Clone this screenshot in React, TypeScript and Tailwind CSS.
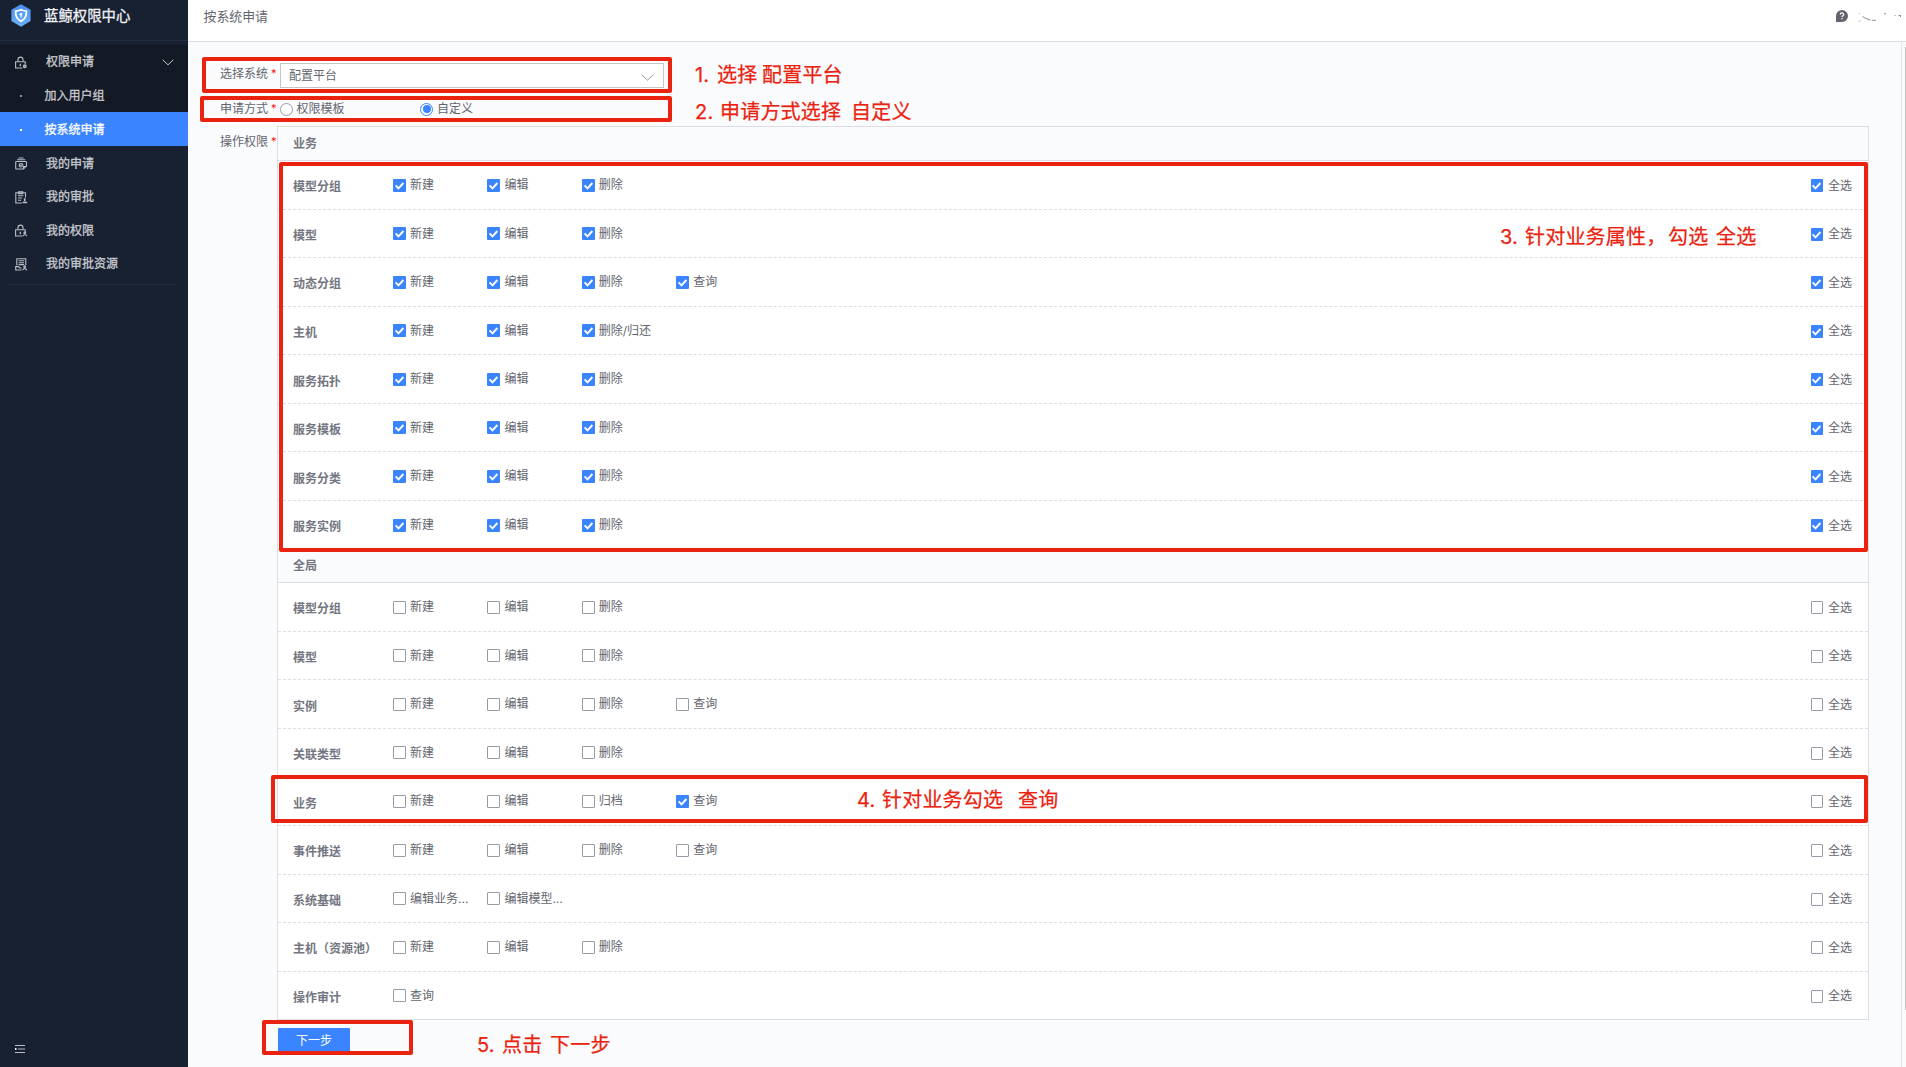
import React from 'react';

type Action = { name: string; checked?: boolean };
type RowData = { label: string; all?: boolean; actions: Action[] };

const on = (...names: string[]): Action[] => names.map((name) => ({ name, checked: true }));
const off = (...names: string[]): Action[] => names.map((name) => ({ name }));

const bizRows: RowData[] = [
  { label: '模型分组', all: true, actions: on('新建', '编辑', '删除') },
  { label: '模型', all: true, actions: on('新建', '编辑', '删除') },
  { label: '动态分组', all: true, actions: on('新建', '编辑', '删除', '查询') },
  { label: '主机', all: true, actions: on('新建', '编辑', '删除/归还') },
  { label: '服务拓扑', all: true, actions: on('新建', '编辑', '删除') },
  { label: '服务模板', all: true, actions: on('新建', '编辑', '删除') },
  { label: '服务分类', all: true, actions: on('新建', '编辑', '删除') },
  { label: '服务实例', all: true, actions: on('新建', '编辑', '删除') },
];

const globalRows: RowData[] = [
  { label: '模型分组', actions: off('新建', '编辑', '删除') },
  { label: '模型', actions: off('新建', '编辑', '删除') },
  { label: '实例', actions: off('新建', '编辑', '删除', '查询') },
  { label: '关联类型', actions: off('新建', '编辑', '删除') },
  { label: '业务', actions: [...off('新建', '编辑', '归档'), ...on('查询')] },
  { label: '事件推送', actions: off('新建', '编辑', '删除', '查询') },
  { label: '系统基础', actions: off('编辑业务...', '编辑模型...') },
  { label: '主机（资源池）', actions: off('新建', '编辑', '删除') },
  { label: '操作审计', actions: off('查询') },
];

function Checkbox({ checked, narrow }: { checked?: boolean; narrow?: boolean }) {
  const size = narrow ? 'w-[12px]' : 'w-[13px]';
  if (!checked) {
    return <span className={`${size} h-[13px] shrink-0 rounded-[1px] border border-[#979ba5] bg-white`} />;
  }
  return (
    <span className={`${size} flex h-[13px] shrink-0 items-center justify-center rounded-[1px] bg-[#3a84ff]`}>
      <svg width="11" height="11" viewBox="0 0 11 11" fill="none" stroke="#fff" strokeWidth="1.9">
        <path d="M1.6 5.4 4.5 8.3 9.4 3" />
      </svg>
    </span>
  );
}

function Row({ row, last }: { row: RowData; last: boolean }) {
  return (
    <div
      className={`flex h-[48.57px] items-center border-b bg-white pl-[15px] pr-[16px] ${
        last ? 'border-solid border-[#dcdee5]' : 'border-dashed border-[#dcdee5]'
      }`}
    >
      <div className="w-[100px] shrink-0 whitespace-nowrap pt-[5px] font-bold text-[#737680]">{row.label}</div>
      <div className="flex grow pt-[0.6px]">
        {row.actions.map((a) => (
          <div key={a.name} className="flex w-[94.4px] items-center gap-[4px] whitespace-nowrap">
            <Checkbox checked={a.checked} />
            <span>{a.name}</span>
          </div>
        ))}
      </div>
      <div className="flex items-center gap-[5px] pt-[1.6px]">
        <Checkbox checked={row.all} narrow />
        <span>全选</span>
      </div>
    </div>
  );
}

function LockBase() {
  return (
    <>
      <path d="M3 5.500V3.600a2.500 2.500 0 0 1 5 0v1.900" />
      <path d="M7.500 12H.6V5.800h9.600v2.200" />
      <path d="M5.300 7.800v2.400" strokeWidth="1.300" />
    </>
  );
}

function MenuIcon({ kind }: { kind: string }) {
  return (
    <svg width="13" height="13" viewBox="0 0 13 13" fill="none" stroke="#b9bcc4" strokeWidth="1.1" className="shrink-0">
      {kind === 'apply' && (
        <>
          <LockBase />
          <circle cx="9.800" cy="10.300" r="1.200" strokeWidth="1.500" />
        </>
      )}
      {kind === 'mine' && (
        <>
          <path d="M3.500 1h5M2 2.800h8.200" />
          <path d="M8.500 12h-7a.8.8 0 0 1-.8-.8V5.300c0-.5.300-.8.800-.8h9.200c.5 0 .8.300.8.800v3.800z" />
          <path d="M4.200 8.200h3.700c0-2.300-3.700-2.300-3.700 0 0 2 2.200 2.300 3.300 1.200" />
          <path d="M8.500 12V9.500h2.800" />
        </>
      )}
      {kind === 'approve' && (
        <>
          <path d="M6.800 12H.8V1.800h9.700v4.700" />
          <path d="M3.500.8h4.300v1.800H3.500zM3 4.800h5.300M3 7h4M3 9.200h3" />
          <path d="M9.700 7.200v3M7.500 11.500h4.700" strokeWidth="1.700" />
        </>
      )}
      {kind === 'perm' && (
        <>
          <LockBase />
          <circle cx="9.800" cy="9" r=".9" />
          <path d="M8 12.200c.3-2 3.400-2 3.800 0" />
        </>
      )}
      {kind === 'resource' && (
        <>
          <path d="M1.800 7.500V.7h9v6.200M3.600 2.800h5.500M3.600 4.800h5.500M3.600 6.600h5.500" />
          <path d="M6.500 12H.7V8.600h3l1 1.400h2" />
          <circle cx="9.700" cy="8.800" r=".9" />
          <path d="M7.800 12.300c.3-2.200 3.400-2.200 3.800 0" />
        </>
      )}
    </svg>
  );
}

const menu = [
  { kind: 'mine', label: '我的申请' },
  { kind: 'approve', label: '我的审批' },
  { kind: 'perm', label: '我的权限' },
  { kind: 'resource', label: '我的审批资源' },
];

function Sidebar() {
  return (
    <aside className="flex w-[188px] shrink-0 flex-col bg-[#182132] text-[12px] text-[#c8cad0] [-webkit-text-stroke:0.3px_currentColor]">
      <div className="flex h-[41px] items-center border-b border-[#252e3f] pb-[9px] pl-[11px]">
        <svg width="20" height="23" viewBox="0 0 20 23" className="shrink-0">
          <defs>
            <linearGradient id="logo" x1="0" y1="0" x2="0" y2="1">
              <stop offset="0" stopColor="#4b8df2" />
              <stop offset="1" stopColor="#6bb3f8" />
            </linearGradient>
          </defs>
          <path d="M10 .3 19.6 5.8v11.3L10 22.7.4 17.1V5.8z" fill="url(#logo)" />
          <path d="M10 5.7c2 1 3.7 1.400 5.400 1.400.2 5-1.800 8.400-5.400 10.200-3.600-1.800-5.600-5.200-5.400-10.200 1.700 0 3.400-.4 5.400-1.400z" fill="none" stroke="#fff" strokeWidth="1.8" />
          <circle cx="10" cy="10.3" r="1.3" fill="#fff" />
          <path d="M10 10v3.6" stroke="#fff" strokeWidth="1.2" />
        </svg>
        <span className="ml-[13px] pt-px text-[14.4px] text-[#f0f1f5]">蓝鲸权限中心</span>
      </div>
      <div className="mt-[4px] flex h-[67px] flex-col bg-[#141a25]">
        <div className="flex h-[33.5px] items-center pl-[15px] pr-[14px] pt-px">
          <MenuIcon kind="apply" />
          <span className="ml-[18px] grow">权限申请</span>
          <svg width="12" height="7" viewBox="0 0 12 7" fill="none" stroke="#c4c6cc" strokeWidth="1">
            <path d="M.7.8 6 5.800 11.300.8" />
          </svg>
        </div>
        <div className="flex h-[33.5px] items-center pl-[20px] pt-[2px]">
          <span className="h-[2px] w-[2px] bg-[#8a8e99]" />
          <span className="ml-[22.5px]">加入用户组</span>
        </div>
      </div>
      <div className="flex h-[34px] items-center bg-[#3a84ff] pl-[20px] pt-px text-white">
        <span className="h-[2px] w-[2px] bg-white" />
        <span className="ml-[22.5px]">按系统申请</span>
      </div>
      {menu.map((m) => (
        <div key={m.kind} className="flex h-[33.6px] items-center pl-[15px] pt-[1.5px]">
          <MenuIcon kind={m.kind} />
          <span className="ml-[18px]">{m.label}</span>
        </div>
      ))}
      <div className="ml-[8px] mt-[4px] h-px w-[168px] bg-[#252e3f]" />
      <svg width="10" height="10" viewBox="0 0 10 10" className="mb-[13px] ml-[15px] mt-auto" stroke="#b9bdc6">
        <path d="M0 1.500h10M3 5h7M0 8.500h10" />
        <path d="M0 5h1.500" stroke="#fff" strokeWidth="2" />
      </svg>
    </aside>
  );
}

function Label({ children }: { children: React.ReactNode }) {
  return (
    <div className="flex w-[58px] shrink-0 whitespace-nowrap text-[12px] leading-[16px] text-[#63656e]">
      {children}
      <span className="ml-[3px] text-[11px] leading-[14px] text-[#ff1010]">*</span>
    </div>
  );
}

function Radio({ checked }: { checked?: boolean }) {
  return checked ? (
    <span className="flex h-[13px] w-[13px] items-center justify-center rounded-full border border-[#3a84ff] bg-white">
      <span className="h-[8px] w-[8px] rounded-full bg-[#3a84ff]" />
    </span>
  ) : (
    <span className="h-[13px] w-[13px] rounded-full border border-[#979ba5] bg-white" />
  );
}

const frame = 'pointer-events-none absolute rounded-[2px] border-[4px] border-[#ea2310]';
const note =
  'absolute flex whitespace-pre text-[20px] leading-[28px] tracking-[0.2px] text-[#ea2310] [-webkit-text-stroke:0.25px_#ea2310]';

function Annotations() {
  return (
    <>
      <div className={`${frame} left-[202px] top-[57px] h-[36px] w-[470px]`} />
      <div className={`${frame} left-[200px] top-[96px] h-[26px] w-[472px]`} />
      <div className={`${frame} left-[279px] top-[162px] h-[390px] w-[1589px]`} />
      <div className={`${frame} left-[271px] top-[775px] h-[48px] w-[1597px]`} />
      <div className={`${frame} left-[262px] top-[1020px] h-[35px] w-[151px]`} />
      <div className={`${note} left-[695px] top-[61px]`}>
        <span className="w-[22px]">1.</span>
        <span className="w-[45px]">选择</span>
        <span>配置平台</span>
      </div>
      <div className={`${note} left-[695px] top-[98px]`}>
        <span className="w-[25px]">2.</span>
        <span className="w-[131px]">申请方式选择</span>
        <span>自定义</span>
      </div>
      <div className={`${note} left-[1500px] top-[223px]`}>
        <span className="w-[25px]">3.</span>
        <span className="w-[143px]">针对业务属性，</span>
        <span className="w-[48px]">勾选</span>
        <span>全选</span>
      </div>
      <div className={`${note} left-[857px] top-[786px]`}>
        <span className="w-[25px]">4.</span>
        <span className="w-[136px]">针对业务勾选</span>
        <span>查询</span>
      </div>
      <div className={`${note} left-[477px] top-[1031px]`}>
        <span className="w-[25px]">5.</span>
        <span className="w-[48px]">点击</span>
        <span>下一步</span>
      </div>
    </>
  );
}

export default function App() {
  return (
    <div className="relative flex h-[1067px] w-[1906px] overflow-hidden bg-[#fafbfd] font-['Inter','Noto_Sans_CJK_SC',sans-serif] text-[12px] leading-[18px] text-[#63656e]">
      <Sidebar />
      <main className="flex min-w-0 grow flex-col">
        <header className="flex h-[42px] shrink-0 items-center border-b border-[#dcdee5] bg-white pb-[8px] pl-[15.5px]">
          <span className="grow text-[12.9px]">按系统申请</span>
          <svg width="12" height="12" viewBox="0 0 12 12" className="mb-px shrink-0">
            <path d="M6 0a6 6 0 1 1 0 12H0V6a6 6 0 0 1 6-6z" fill="#63656e" />
            <path d="M4.300 4.600c0-2.200 3.400-2.200 3.400 0 0 1.200-1.700 1.100-1.700 2.400M6 8v1.200" stroke="#fff" strokeWidth="1.2" fill="none" />
          </svg>
          <svg width="48" height="12" viewBox="0 0 48 12" className="ml-[10px] shrink-0" stroke="#8b8e98" fill="none" strokeWidth="1">
            <path d="M1 2.500h1M1 10.500l1.500-.8" stroke="#b5b7be" />
            <path d="M4.500 5.500l3 1.800 3 1M10 8.800h2.500M14 9.300h4M26 2.800h2M40.500 4.500h2.500M42.500 4v2" />
            <path d="M36 4.500h2" stroke="#c4c6cc" />
          </svg>
        </header>
        <div className="flex min-h-0 grow">
          <div className="flex min-w-0 grow flex-col pl-[32px] pt-[21px]">
            <div className="flex h-[25px]">
              <div className="pt-[3px]">
                <Label>选择系统</Label>
              </div>
              <div className="ml-[2px] flex w-[384px] items-center border border-[#c4c6cc] bg-white pl-[8px] pr-[9px]">
                <span className="grow">配置平台</span>
                <svg width="13" height="7" viewBox="0 0 13 7" fill="none" stroke="#979ba5" className="mt-[3px]">
                  <path d="M.5.700 6.500 6.200 12.500.7" />
                </svg>
              </div>
            </div>
            <div className="mt-[13px] flex h-[16px] items-center">
              <Label>申请方式</Label>
              <div className="ml-[2px] flex w-[140px] items-center gap-[3.5px]">
                <Radio />
                <span>权限模板</span>
              </div>
              <div className="flex items-center gap-[4px]">
                <Radio checked />
                <span>自定义</span>
              </div>
            </div>
            <div className="mt-[9px] flex">
              <div className="w-[57px] shrink-0 pt-[8px]">
                <Label>操作权限</Label>
              </div>
              <div className="w-[1592px] border-x border-t border-[#dcdee5]">
                <div className="flex h-[34px] items-center border-b border-[#dcdee5] pl-[15px] font-bold text-[#737680]">业务</div>
                {bizRows.map((r, i) => (
                  <Row key={r.label} row={r} last={i === bizRows.length - 1} />
                ))}
                <div className="flex h-[33.64px] items-center border-b border-[#dcdee5] pl-[15px] font-bold text-[#737680]">全局</div>
                {globalRows.map((r, i) => (
                  <Row key={r.label} row={r} last={i === globalRows.length - 1} />
                ))}
              </div>
            </div>
            <button className="ml-[58px] mt-[8px] h-[26px] w-[72px] shrink-0 rounded-[1px] bg-[#3a84ff] text-[12px] text-white">
              下一步
            </button>
          </div>
          <div className="flex w-[5px] shrink-0 justify-end border-l border-[#e6e6e8] bg-[#fafafa] pt-[5px]">
            <div className="h-[963px] w-px bg-[#c1c1c1]" />
          </div>
        </div>
      </main>
      <Annotations />
    </div>
  );
}
